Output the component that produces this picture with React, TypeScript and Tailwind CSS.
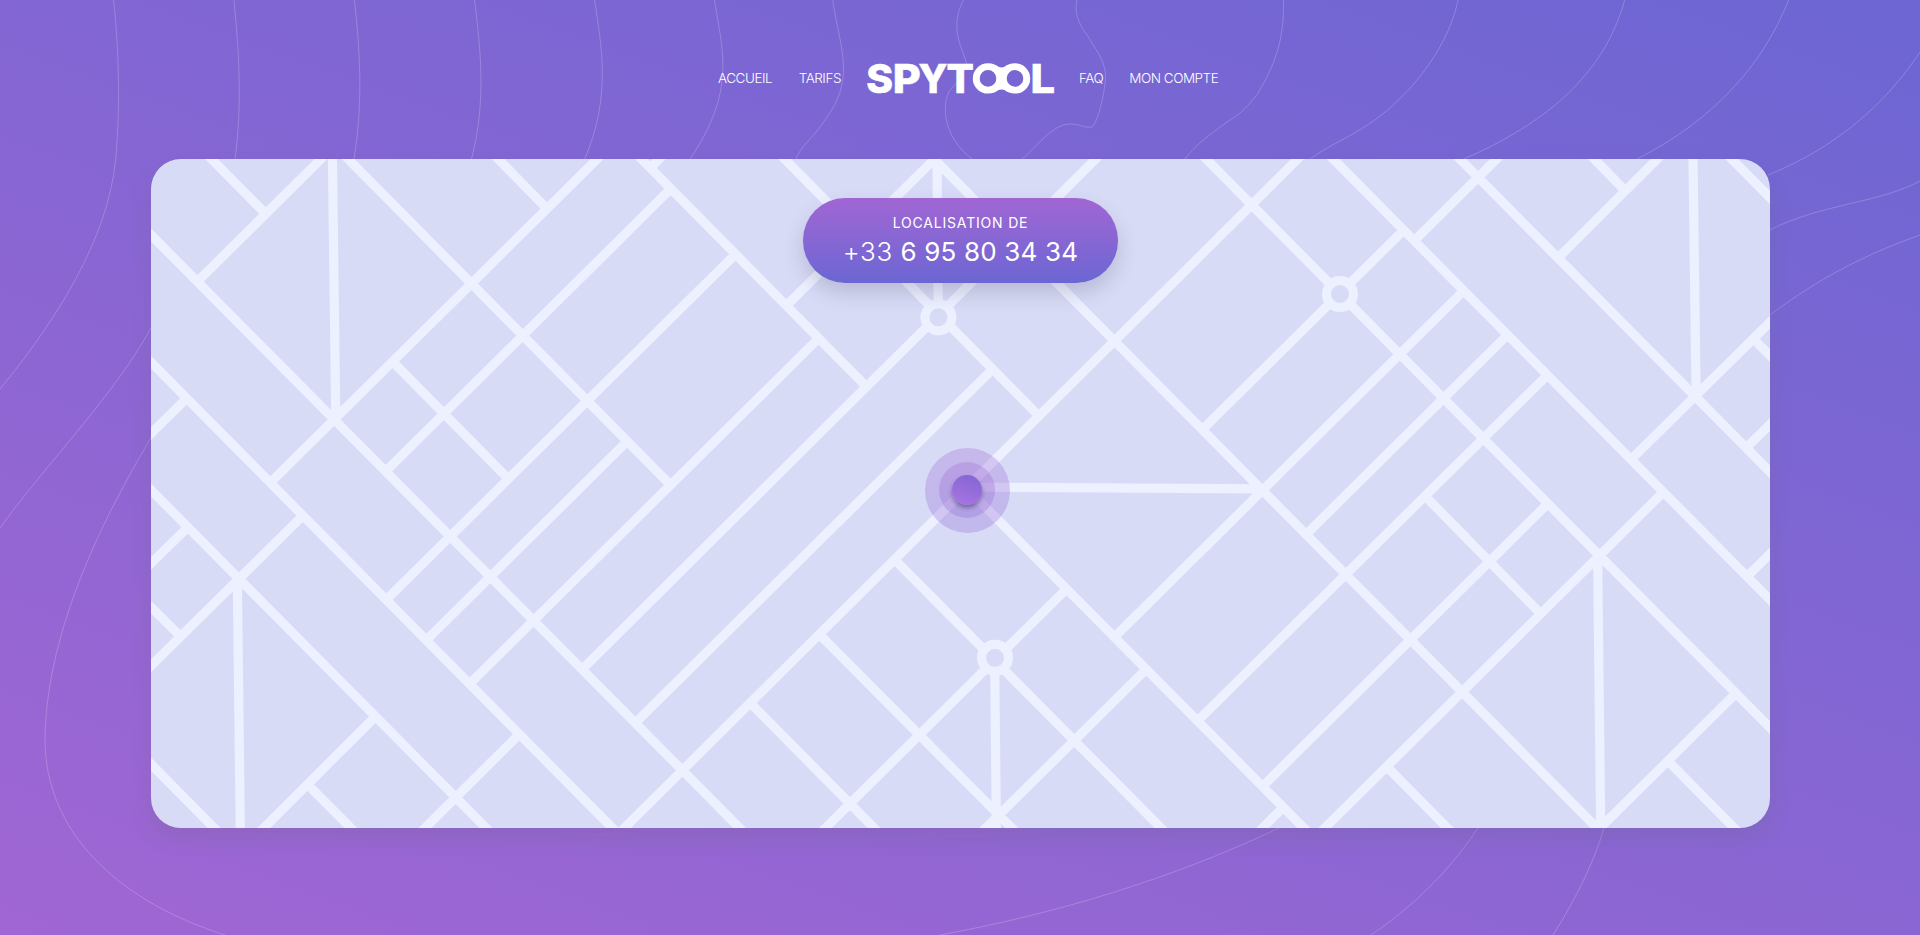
const contours = [
  'M113.6 0C118 40 121 100 115.7 159C108 240 55 322 0 389',
  'M233.9 0C238 40 243 100 235 159M152 326C115 395 45 465 0 528',
  'M354.4 0C359 40 364 100 354 159M152 436C90 540 48 640 45 735C43 840 130 905 225 935',
  'M474.5 0C480 45 487 100 471.5 159',
  'M594.6 0C601 45 612 95 584.8 159',
  'M714.5 0C722 50 737 90 690 159',
  'M832.8 0C839 45 855 75 829.7 113C813 140 803 142 796 159',
  'M963.4 0C948 30 964 50 966.5 63.8C963 80 954 84 948.7 92C940 112 948 142 972.5 159',
  'M1076.9 0C1073 15 1082 28 1087 35C1100 56 1106 63 1105.5 80C1103 102 1096 127 1091 127C1084 128 1080 124 1070 124C1052 124 1036 148 1022 159',
  'M1283.5 0C1284 35 1278 60 1258 93C1242 115 1236 115 1223 125C1204 139 1196 145 1184.7 159',
  'M1458 0C1450 40 1420 85 1379 117C1352 137 1334 142 1310 159',
  'M1624.7 0C1608 60 1565 115 1464 159',
  'M1788.6 0C1765 60 1718 118 1637 159',
  'M1920 52C1885 105 1835 148 1768 175',
  'M1920 181C1880 203 1820 204 1770 230',
  'M1920 235C1855 258 1810 285 1770 315',
  'M1279 828C1170 880 1050 915 940 935',
  'M1478 828C1450 870 1415 905 1371 935',
  'M1604 828C1593 865 1575 900 1553 935',
];

const streets = [
  // down to the right
  'M211.5 159L262.7 210.7', 'M141 224.9L750 838.5', 'M141 352.2L622 837.8', 'M141 479.9L496 838.1',
  'M141 754L224 838', 'M141 597.3L177.3 633.3', 'M338.3 149L670.5 485', 'M488.3 149L546 207.7',
  'M393 362L508.5 479', 'M631.6 149L866.5 386.7', 'M774.7 149L1038.5 415.4', 'M933.6 158.5L1606.6 837.7',
  'M308 785L361 838.2', 'M750 702.7L884 838', 'M819.5 634.5L1021.7 838', 'M895 560L1171 838',
  'M965 486.5L1313.7 838', 'M1196.3 149L1780 737.7', 'M1323.3 149L1780 609.8', 'M1450 149L1780 482',
  'M1584.3 149L1625 190.5', 'M1721.7 149L1780 207.7', 'M1754 339.5L1780 365.5', 'M1426 497L1540 613',
  'M1668.5 761.5L1744 838', 'M1387 767L1457.3 838', 'M201.500 149L212 159.500',
  // down to the left
  'M331 149L198 281', 'M186 399L141 443.2', 'M187 528L141 573.2', 'M302.5 516L141 675.7', 'M375 717L253.7 838',
  'M519 734.5L415 838', 'M607.3 149L271 482', 'M670 189.6L386 471', 'M735 254.7L387 599', 'M626.5 442L427 639.5',
  'M818 339L470.5 683', 'M669.3 149L650.5 167.7', 'M936 157.6L787 305', 'M1105.7 149L583 668.5', 'M992 369.8L635.5 722.8',
  'M1307.7 149L614.3 838', 'M1066 589.5L815.3 838', 'M1146 669.5L975.7 838', 'M1463 291.6L1115.5 636',
  'M1509.5 333L1306.5 534', 'M1546.5 376L1198.5 720', 'M1547 504.5L1263.5 785.5', 'M1662.5 493L1314.7 838',
  'M1283 807.5L1252.7 838', 'M1403 230.8L1203 429', 'M1506.7 149L1415 240', 'M1667.3 149L1558.5 257.5',
  'M1780 312.4L1631.5 459', 'M1780 414.7L1746.5 447.5', 'M1780 544L1747.5 576', 'M1735 694.3L1590 838',
  // verticals and the avenue
  'M332.3 149L335.8 419', 'M237.3 578L240.4 838', 'M937 157L938.3 317', 'M994.6 658L996.5 838',
  'M1692.9 149L1696.1 396', 'M1597.6 556L1600.8 838', 'M967 487L1262 488.8',
];

const roundabouts = [[938.4, 317.3], [1340, 294], [995, 657.8]];

function Logo() {
  const letter = { fontFamily: 'Inter, sans-serif', fontWeight: 800, fontSize: 40 };
  return (
    <svg
      width="208"
      height="52"
      viewBox="-10 -10 208 52"
      fill="#fff"
      stroke="#fff"
      strokeWidth="0.6"
      aria-label="Spytool"
    >
      <text x="-0.8" y="29.500" textLength="26.800" lengthAdjust="spacingAndGlyphs" style={letter}>S</text>
      <text x="25.8" y="29.500" textLength="28" lengthAdjust="spacingAndGlyphs" style={letter}>P</text>
      <text x="51.5" y="29.500" textLength="29" lengthAdjust="spacingAndGlyphs" style={letter}>Y</text>
      <text x="79.5" y="29.500" textLength="27.400" lengthAdjust="spacingAndGlyphs" style={letter}>T</text>
      <path
        stroke="none"
        fillRule="evenodd"
        d="M121 .2C126 .2 129.500 2.100 131.500 3.700Q134.700 5.200 137.500 3.700C140 1.600 143.700 .2 148 .2A15.200 15.200 0 0 1 148 30.600C143.700 30.600 140 29.100 137.500 27Q134.700 25.800 131.500 27C129.500 28.600 126 30.600 121 30.600A15.200 15.200 0 0 1 121 .2ZM121 7.100A8.300 8.300 0 1 0 121 23.700A8.300 8.300 0 1 0 121 7.100ZM148 7.100A8.300 8.300 0 1 0 148 23.700A8.300 8.300 0 1 0 148 7.100Z"
      />
      <text x="163.500" y="29.500" textLength="24.500" lengthAdjust="spacingAndGlyphs" style={letter}>L</text>
    </svg>
  );
}

function NavLink({ children }: { children: string }) {
  return (
    <a href="#" className="text-[13.5px] leading-5 font-light tracking-[-0.035em] whitespace-nowrap text-white">
      {children}
    </a>
  );
}

function Header() {
  return (
    <header className="relative flex h-[159px] items-start pt-[53px] pl-[718px]">
      <nav className="flex h-[50px] items-center">
        <div className="flex w-[139px] items-center gap-[26.5px]">
          <NavLink>ACCUEIL</NavLink>
          <NavLink>TARIFS</NavLink>
        </div>
        <div className="h-[50px] w-[222px]">
          <Logo />
        </div>
        <div className="flex items-center gap-[26px]">
          <NavLink>FAQ</NavLink>
          <NavLink>MON COMPTE</NavLink>
        </div>
      </nav>
    </header>
  );
}

function StreetMap() {
  return (
    <svg className="absolute inset-0 h-full w-full" viewBox="151 159 1619 669" preserveAspectRatio="none">
      <path d={streets.join('')} fill="none" stroke="#edf0ff" strokeWidth="9.200" />
      {roundabouts.map(([x, y]) => (
        <circle key={x} cx={x} cy={y} r="13.500" fill="#d8dbf6" stroke="#edf0ff" strokeWidth="9" />
      ))}
    </svg>
  );
}

function Marker() {
  return (
    <div className="absolute top-[288.500px] left-[773.500px] flex size-[85px] items-center justify-center rounded-full bg-linear-to-t from-[#8a66d3]/30 to-[#a066d3]/30">
      <div className="flex size-14 items-center justify-center rounded-full bg-linear-to-t from-[#8a66d3]/30 to-[#a066d3]/30">
        <div className="size-[30px] rounded-full bg-linear-[20deg] from-[#ab75e2] to-[#8065d3] shadow-[0_3px_4px_rgba(40,40,80,0.45)]" />
      </div>
    </div>
  );
}

export default function App() {
  return (
    <div className="relative h-[935px] w-full overflow-hidden bg-linear-[20deg] from-[#a066d3] to-[#6d66d3] font-['Inter',sans-serif]">
      <svg className="absolute inset-0" width="1920" height="935" viewBox="0 0 1920 935">
        <path d={contours.join('')} fill="none" stroke="#fff" strokeOpacity="0.2" strokeWidth="1" />
      </svg>
      <Header />
      <main className="relative mr-[150px] ml-[151px] flex h-[669px] justify-center overflow-hidden rounded-[30px] bg-[#d8dbf6] pt-[39px] shadow-[0_10px_20px_rgba(100,100,120,0.2)]">
        <StreetMap />
        <Marker />
        <div className="relative flex h-[85px] w-[315px] flex-col items-center rounded-[42px] bg-linear-to-b from-[#a066d3] to-[#6b66d3] pt-[15px] text-white shadow-[0_10px_20px_rgba(60,60,90,0.2)]">
          <span className="text-[14px] leading-5 tracking-[0.058em]">LOCALISATION DE</span>
          <span className="mt-[1px] text-[26px] leading-9 tracking-[0.007em]">
            <span className="font-light tracking-[0.025em]">+33</span> 6 95 80 34 34
          </span>
        </div>
      </main>
    </div>
  );
}
